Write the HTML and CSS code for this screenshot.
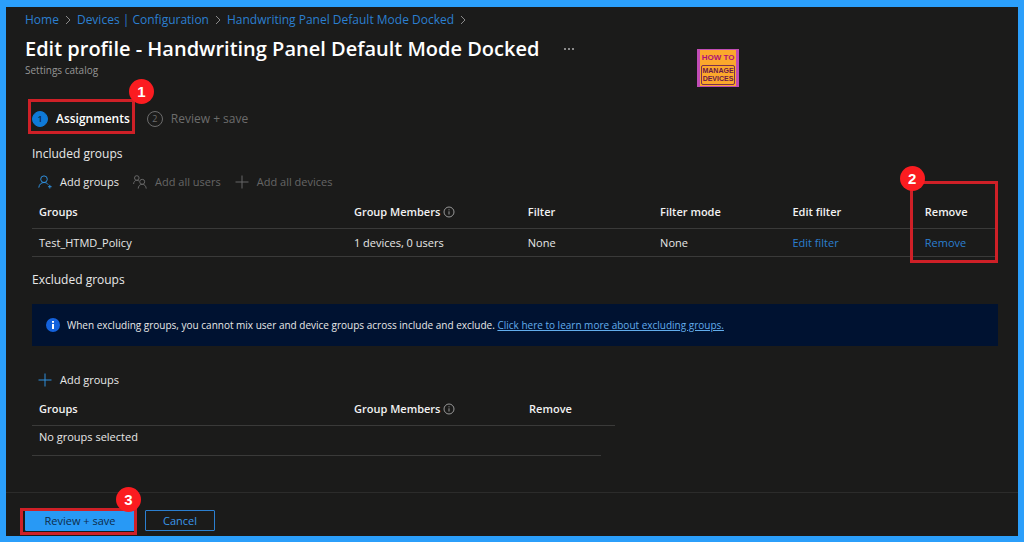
FILE: index.html
```html
<!DOCTYPE html>
<html lang="en">
<head>
<meta charset="utf-8">
<title>Edit profile - Handwriting Panel Default Mode Docked</title>
<link rel="stylesheet" href="styles.css">
</head>
<body>
<div class="frame">
  <header class="page-head">
    <nav class="breadcrumb" aria-label="Breadcrumb">
      <a href="#">Home</a>
      <svg class="chevron" viewBox="0 0 6 10"><path d="M1 1l4 4-4 4"/></svg>
      <a href="#">Devices | Configuration</a>
      <svg class="chevron" viewBox="0 0 6 10"><path d="M1 1l4 4-4 4"/></svg>
      <a href="#">Handwriting Panel Default Mode Docked</a>
      <svg class="chevron" viewBox="0 0 6 10"><path d="M1 1l4 4-4 4"/></svg>
    </nav>
    <div class="title-row">
      <h1>Edit profile - Handwriting Panel Default Mode Docked</h1>
      <button class="more" type="button" aria-label="More"><svg viewBox="0 0 12 4"><circle cx="2" cy="2" r="1"/><circle cx="6" cy="2" r="1"/><circle cx="10" cy="2" r="1"/></svg></button>
    </div>
    <p class="subtitle">Settings catalog</p>
    <div class="logo">
      <span class="logo-top">HOW TO</span>
      <span class="logo-box"><span>MANAGE</span><span>DEVICES</span></span>
    </div>
  </header>

  <main class="content">
    <div class="steps">
      <button class="step step-active" type="button"><span class="step-num">1</span>Assignments
        <span class="callout callout-step"><span class="badge badge-right">1</span></span>
      </button>
      <button class="step" type="button"><span class="step-num">2</span>Review + save</button>
    </div>

    <h2>Included groups</h2>
    <div class="toolbar">
      <button class="command" type="button">
        <svg class="icon accent" viewBox="0 0 14 14"><circle cx="6" cy="4.2" r="3.3"/><path d="M.8 12.6c.3-3 2.300-5.100 5.200-5.100 1.900 0 3.300.8 4.200 2.100M11.800 9.900v3.600M10 11.700h3.600"/></svg>Add groups
      </button>
      <button class="command" type="button" disabled>
        <svg class="icon" viewBox="0 0 14 14"><circle cx="3.800" cy="3" r="2.300"/><circle cx="9.200" cy="6.800" r="2.500"/><path d="M.6 9c.1-2.200 1.400-3.700 3.200-3.700 1 0 1.700.3 2.300.9M5.200 13.600c.1-2.600 1.700-4.300 4-4.300s3.900 1.700 4 4.300"/></svg>Add all users
      </button>
      <button class="command" type="button" disabled>
        <svg class="icon" viewBox="0 0 14 14"><path d="M7 .5v13M.5 7h13"/></svg>Add all devices
      </button>
    </div>

    <table class="grid included">
      <colgroup><col class="c-groups"><col class="c-members"><col class="c-filter"><col class="c-filter"><col class="c-filter"><col></colgroup>
      <thead>
        <tr>
          <th>Groups</th>
          <th>Group Members <svg class="info" viewBox="0 0 12 12"><circle cx="6" cy="6" r="5"/><path d="M6 5.300v3.200M6 3.300v1"/></svg></th>
          <th>Filter</th><th>Filter mode</th><th>Edit filter</th>
          <th class="anchor">Remove<span class="callout callout-column"><span class="badge badge-left">2</span></span></th>
        </tr>
      </thead>
      <tbody>
        <tr>
          <td>Test_HTMD_Policy</td><td>1 devices, 0 users</td><td>None</td><td>None</td>
          <td><a href="#">Edit filter</a></td><td><a href="#">Remove</a></td>
        </tr>
      </tbody>
    </table>

    <h2 class="second">Excluded groups</h2>
    <div class="banner">
      <svg class="banner-icon" viewBox="0 0 14 14"><circle cx="7" cy="7" r="7"/><path d="M7 6v5M7 3v1.800"/></svg>
      <p>When excluding groups, you cannot mix user and device groups across include and exclude. <a href="#">Click here to learn more about excluding groups.</a></p>
    </div>

    <div class="toolbar">
      <button class="command" type="button">
        <svg class="icon accent" viewBox="0 0 14 14"><path d="M7 .5v13M.5 7h13"/></svg>Add groups
      </button>
    </div>
    <table class="grid excluded">
      <colgroup><col class="x-groups"><col class="x-members"><col></colgroup>
      <thead>
        <tr>
          <th>Groups</th>
          <th>Group Members <svg class="info" viewBox="0 0 12 12"><circle cx="6" cy="6" r="5"/><path d="M6 5.300v3.200M6 3.300v1"/></svg></th>
          <th>Remove</th>
        </tr>
      </thead>
      <tbody>
        <tr><td class="empty" colspan="3"><div>No groups selected</div></td></tr>
      </tbody>
    </table>
  </main>

  <footer class="actions">
    <div class="anchor">
      <button class="btn primary" type="button">Review + save</button>
      <span class="callout callout-save"><span class="badge badge-save">3</span></span>
    </div>
    <button class="btn" type="button">Cancel</button>
  </footer>
</div>
</body>
</html>
```
FILE: styles.css
```css
* { box-sizing: border-box; }
body {
  margin: 0;
  background: #1b1b1a;
  color: #e8e8e8;
  font: 11px/16px "Open Sans", "Noto Sans", sans-serif;
}
h1, h2, p { margin: 0; }
button { font: inherit; color: inherit; background: none; border: 0; padding: 0; }
a { color: #2b7fd0; text-decoration: none; }
svg { flex: none; fill: none; stroke: currentColor; }

.frame {
  min-height: 100vh;
  display: flex;
  flex-direction: column;
  border: 6px solid #2b9ffb;
  border-top-width: 7px;
}

.page-head { position: relative; padding: 4px 19px 0; }
.breadcrumb { display: flex; align-items: center; gap: 6px; height: 18px; font-size: 12px; }
.chevron { width: 6px; height: 10px; color: #8a8a8a; }
.title-row { display: flex; align-items: center; gap: 24px; margin-top: 6px; }
h1 { font-size: 20px; line-height: 28px; font-weight: 600; color: #fff; }
.more { display: flex; color: #b0b0b0; }
.more svg { width: 12px; height: 4px; fill: currentColor; stroke: none; }
.subtitle { font-size: 10px; line-height: 14px; color: #969696; }

.logo {
  position: absolute;
  left: 691px;
  top: 42px;
  width: 42px;
  height: 38px;
  padding-top: 2px;
  display: flex;
  flex-direction: column;
  align-items: center;
  gap: 1px;
  background: #fba82c;
  border: solid #c04cb4;
  border-width: 1px 3px;
  color: #b01078;
  font: bold 8px/12px "Liberation Sans", sans-serif;
  white-space: nowrap;
}
.logo-box {
  display: flex;
  flex-direction: column;
  align-items: center;
  border: 1px solid #7a3050;
  border-radius: 2px;
  padding: 1px 0;
  color: #6b1848;
  font-size: 7px;
  line-height: 8px;
}

.content { padding: 23px 20px 0 26px; }
.steps { display: flex; gap: 17px; height: 38px; font-size: 12px; }
.step { position: relative; display: flex; align-items: center; gap: 8px; color: #6c6c6c; }
.step-num {
  width: 16px;
  height: 16px;
  border: 1px solid #6c6c6c;
  border-radius: 50%;
  font-size: 9px;
  line-height: 14px;
  text-align: center;
}
.step-active { color: #fff; font-weight: 600; }
.step-active .step-num { background: #0f7ad8; border-color: #0f7ad8; color: #0c2c4a; }

h2 { font-size: 12px; line-height: 16px; font-weight: 400; margin-top: 8px; }
.toolbar { display: flex; gap: 14px; height: 40px; padding-left: 6px; }
.command { display: flex; align-items: center; gap: 8px; }
.command:disabled { color: #666; }
.icon { width: 14px; height: 14px; }
.accent { color: #2f8fdc; }

.grid { border-collapse: collapse; table-layout: fixed; width: 100%; }
.grid th, .grid td { padding: 0 0 0 7px; text-align: left; white-space: nowrap; }
.grid th { height: 26px; font-weight: 600; color: #f2f2f2; padding-bottom: 6px; border-bottom: 1px solid #3a3a39; }
.grid td { height: 28px; padding-top: 2px; border-bottom: 1px solid #3a3a39; }
.info { width: 12px; height: 12px; vertical-align: -2px; color: #989898; }
.c-groups { width: 32.6%; }
.c-members { width: 18%; }
.c-filter { width: 13.7%; }
.excluded { width: 60.4%; }
.x-groups { width: 54%; }
.x-members { width: 30%; }
.grid .empty { height: auto; padding: 0; border: 0; }
.empty div { margin-right: 14px; padding: 3px 0 10px 7px; border-bottom: 1px solid #3a3a39; }

.second { margin-top: 15px; }
.banner {
  display: flex;
  align-items: center;
  gap: 7px;
  min-height: 42px;
  margin: 16px 0 14px;
  padding: 0 14px;
  background: #001231;
  font-size: 10px;
}
.banner a { color: #62adec; text-decoration: underline; }
.banner-icon { width: 14px; height: 14px; color: #fff; stroke-width: 2; }
.banner-icon circle { fill: #1462dc; stroke: none; }

.actions {
  display: flex;
  align-items: center;
  gap: 10px;
  margin-top: auto;
  padding: 17px 19px 5px;
  border-top: 1px solid #2c2c2b;
}
.btn { height: 21px; min-width: 70px; border: 1px solid #2b7fd0; border-radius: 1px; color: #3a97ea; line-height: 18px; }
.primary { display: block; width: 110px; background: #2899f5; border-color: #2899f5; color: #0d2c4a; }

.anchor { position: relative; }
.callout { position: absolute; border: 3px solid #cf2027; pointer-events: none; }
.callout-step { inset: -1px -5px 4px -4px; }
.callout-column { left: -8px; right: 0; top: -21px; height: 82px; }
.callout-save { inset: -2px -2px -4px -5px; }
.badge {
  position: absolute;
  width: 25px;
  height: 25px;
  border-radius: 50%;
  background: #fb1c20;
  color: #fff;
  font: bold 15px/25px "Liberation Sans", sans-serif;
  text-align: center;
}
.badge-right { right: -22px; top: -23px; }
.badge-left { left: -13px; top: -18px; }
.badge-save { right: -7px; top: -24px; }
```
